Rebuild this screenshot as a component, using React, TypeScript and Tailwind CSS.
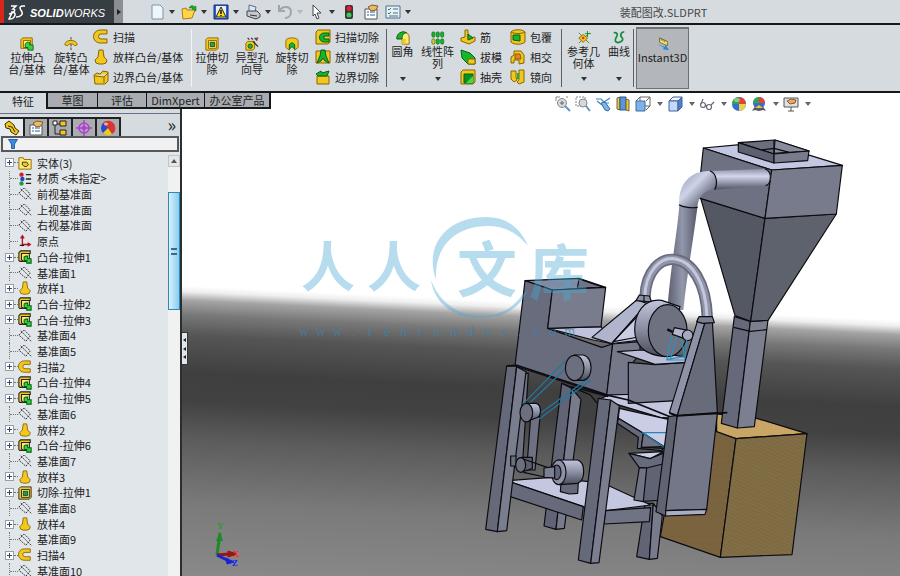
import React from 'react';

const Y = '#f2c81e';
const YL = '#ffe978';
const YD = '#8a6400';
const G = '#17b52a';
const GD = '#07601a';

const glyphs: Record<string, React.ReactNode> = {
  extrude: (
    <g strokeWidth="1">
      <path d="M1 3l2-2h11v10l-2 2H1z" fill={Y} stroke={YD} />
      <path d="M4 4h8v8H4z" fill={YL} stroke={YD} />
      <path d="M6 8l2-2h3v3h4v6H9v-3H6z" fill="#35d33f" stroke={GD} />
    </g>
  ),
  treeboss: (
    <g strokeWidth="1.200">
      <path d="M1 3l2-2h11v3H5v9H2l-1-1z" fill={Y} stroke="#222" />
      <path d="M4 4h9v9H6l-2-2z" fill={YL} stroke="#222" />
      <path d="M7 8l2-1h2v3h4v5h-5v-3H7z" fill="#35d33f" stroke={GD} />
    </g>
  ),
  revolve: (
    <g>
      <path d="M8 0v16" stroke="#333" strokeDasharray="3 1" />
      <path d="M1 9c0-4 4-5 7-5s7 1 7 5l-3 1c-1-2-2-2-4-2s-3 0-4 2z" fill={Y} stroke={YD} />
    </g>
  ),
  sweep: (
    <path d="M14 1H7a6 6 0 0 0 0 13h7v-4H8a2 2 0 0 1 0-5h6z" fill={Y} stroke={YD} />
  ),
  loft: <path d="M6 1h4l1 7 3 3-1 3-3 1H6l-3-1-1-3 3-3z" fill={Y} stroke={YD} />,
  boundary: (
    <path d="M1 6l3-2 3 1 3-3 5 1v9l-3 3H2zM2 7l9 1 4-4M11 8v6" fill={Y} stroke={YD} />
  ),
  cut: (
    <g>
      <path d="M1 3l2-2h12v12l-2 2H1z" fill={Y} stroke={YD} />
      <path d="M4 4h9v9H4z" fill={YL} stroke={YD} />
      <path d="M6 6h5v5H6z" fill="#3f9a32" stroke="#134d12" />
    </g>
  ),
  hole: (
    <g>
      <path d="M1 7l2-2h8v8l-2 2H1z" fill={Y} stroke={YD} />
      <circle cx="6" cy="10.500" r="2.500" fill="#3aa836" stroke={GD} />
      <path d="M3 1l2 2M7 1l2 2M11 1l3 3M9 5l6 6" stroke="#333" strokeWidth="1.500" />
      <path d="M13 1l2 1" stroke="#c22" strokeWidth="2" />
    </g>
  ),
  revcut: (
    <g>
      <path d="M1 4c0-4 14-4 14 0v8l-4 3V9H5v6l-4-3z" fill={Y} stroke={YD} />
      <path d="M5 14V9c1-3 5-3 6 0v5l-3-3z" fill={G} stroke={GD} />
    </g>
  ),
  sweepcut: (
    <g>
      <path d="M1 3l2-2h12v12l-2 2H1z" fill={Y} stroke={YD} />
      <path d="M14 4H9a4 4 0 0 0 0 9h5v-3H9V7h5z" fill={G} stroke={GD} />
    </g>
  ),
  loftcut: (
    <g>
      <path d="M1 2h14v12H1z" fill={Y} stroke={YD} />
      <path d="M6 1h4l1 6 3 7-4-2-2-3-2 3-4 2 3-7z" fill={G} stroke={GD} />
    </g>
  ),
  boundcut: (
    <g>
      <path d="M2 7h12v8H2z" fill={Y} stroke={YD} />
      <path d="M1 5l5-3 1 2 7-2-2 5H3z" fill={G} stroke={GD} />
    </g>
  ),
  fillet: (
    <g>
      <path d="M1 9c0-5 3-8 8-8 4 1 6 3 6 6v8H7V9z" fill={YL} stroke={YD} />
      <path d="M7 9h4v6H7z" fill={Y} />
      <path d="M1 9c0-5 3-8 8-8l3 1c-4 1-5 3-5 7z" fill={G} stroke={GD} />
    </g>
  ),
  pattern: (
    <g stroke={GD} strokeWidth=".7">
      {[1, 6, 11].map((x) => (
        <g key={x}>
          <rect x={x} y="1" width="3.500" height="6" rx="1.500" fill={G} />
          <rect x={x} y="9" width="3.500" height="6" rx="1.500" fill={x === 1 ? Y : G} />
        </g>
      ))}
    </g>
  ),
  rib: (
    <g>
      <path d="M5 1h3v8l7-1v4l-6 3-8-3v-3l4-1z" fill={Y} stroke={YD} />
      <path d="M8 5l5 4-5 2z" fill={G} stroke={GD} />
    </g>
  ),
  draft: (
    <g>
      <path d="M1 1l9 3 5 5v6H8L2 9z" fill={G} stroke={GD} />
      <path d="M8 10h7v5H8z" fill={Y} stroke={YD} />
    </g>
  ),
  shell: (
    <g>
      <path d="M1 3l2-2h12v12l-2 2H1z" fill={Y} stroke={YD} />
      <path d="M4 5h9v9H4z" fill="#0f8f22" stroke={GD} />
      <path d="M6 14l7-7v7z" fill="#39df46" />
    </g>
  ),
  wrap: (
    <g>
      <path d="M1 3c2-3 12-3 14 0v10c-3 3-11 3-14 0z" fill={Y} stroke={YD} />
      <path d="M3 6h7v6l-7-1z" fill={G} stroke={GD} />
      <path d="M1 3c3 2 11 2 14 0" fill="none" stroke={YD} />
    </g>
  ),
  intersect: (
    <g>
      <path d="M4 2h7l3 4v8l-5 1v-4H4v3H1V8l3-2z" fill={Y} stroke={YD} />
      <path d="M5 5h5l1 5H5z" fill="#e8811c" stroke={YD} />
    </g>
  ),
  mirror: (
    <g>
      <path d="M1 2h5v6l1 3-3 2-3-3z" fill={Y} stroke={YD} />
      <path d="M9 1h5v12l-5 2-2-2 2-2z" fill={Y} stroke={YD} />
      <path d="M7 4h2v6H7z" fill={G} />
    </g>
  ),
  refgeo: (
    <g>
      <path d="M2 2l12 12M2 14L14 2" stroke="#2d8c2d" />
      <path d="M2 8l5-4 5 4-5 5z" fill={Y} stroke={YD} />
      <circle cx="7" cy="8" r="1.500" fill="#d33" />
      <path d="M12 0v7M9 3h7" stroke="#128a1c" />
    </g>
  ),
  curves: (
    <path
      d="M2 2c4-1 5 2 3 5s-2 7 3 6 5-4 3-6-1-6 3-6"
      fill="none"
      stroke="#128a3a"
      strokeWidth="2"
    />
  ),
  instant: (
    <g>
      <path d="M4 1l9 4v5L4 6z" fill="#f3e27a" stroke="#75651a" />
      <path d="M6 2v2M8 3v2M10 4v2" stroke="#75651a" />
      <path d="M1 8l8 4-1 2 7 1-4-6-1 2z" fill="#2b86d8" />
    </g>
  ),
  folder: (
    <g>
      <path d="M1 2h5l1 2h8v11H1z" fill={YL} stroke={YD} />
      <path d="M5 7h5l2 3-2 2H7l-2-2z" fill={Y} stroke="#222" />
    </g>
  ),
  material: (
    <g>
      <circle cx="4" cy="3" r="2.500" fill="#d3202b" />
      <circle cx="4" cy="13" r="2.500" fill="#23983a" />
      <circle cx="5" cy="8" r="2.500" fill="#2447c8" />
      <path d="M9 3h6M9 8h6M9 13h6" stroke="#222" strokeWidth="1.500" />
    </g>
  ),
  plane: (
    <g fill="none" stroke="#222" strokeDasharray="2 1">
      <path d="M1 7l6-6 7 7-5 6z" />
      <path d="M3 2l12 12" />
    </g>
  ),
  origin: (
    <g fill="none" stroke="#b3121d" strokeWidth="1.500">
      <path d="M5 14V2M3 5l2-3 2 3M5 12h9M11 10l3 2-3 2" />
      <path d="M2 13h5" stroke="#222" />
    </g>
  ),
  treecut: (
    <g>
      <path d="M1 3l2-2h12v12l-2 2H1z" fill={Y} stroke="#222" />
      <path d="M4 4h9v9H4z" fill={YL} stroke="#222" />
      <path d="M6 6h5v5H6z" fill="#1c9a54" stroke="#134d12" />
    </g>
  ),
  part: (
    <g>
      <path d="M1 4l4-3 5 4 1 3 4 3-3 4-5-3-1-3-4-1z" fill={Y} stroke="#3b2d00" />
      <path d="M4 6l4 1 3 5" fill="none" stroke="#3b2d00" />
    </g>
  ),
  props: (
    <g>
      <path d="M2 5h12v10H2z" fill="#fff" stroke="#555" />
      <path d="M4 8h2M4 11h2M7 8h5M7 11h5" stroke="#2a5ca8" />
      <path d="M5 3l4-2 6 1-2 4-5 1z" fill="#e9b96e" stroke="#8a5a1c" />
    </g>
  ),
  config: (
    <g>
      <path d="M3 1v13h6M3 4h6" fill="none" stroke="#222" />
      <path d="M8 1h6v5H8zM8 10h6v5H8z" fill={Y} stroke="#222" />
      <path d="M1 1h4v4H1z" fill="#fff" stroke="#222" />
    </g>
  ),
  target: (
    <g fill="none" stroke="#b23fd0" strokeWidth="1.500">
      <circle cx="8" cy="8" r="5" />
      <circle cx="8" cy="8" r="1.500" />
      <path d="M8 0v16M0 8h16" />
    </g>
  ),
  ball: (
    <g>
      <circle cx="8" cy="8" r="7" fill="#2748c8" />
      <path d="M8 8L3 3a7 7 0 0 1 11 1z" fill="#e0352b" />
      <path d="M8 8l6-4a7 7 0 0 1-2 10z" fill="#e0352b" />
      <path d="M8 8l4 6a7 7 0 0 1-9-1z" fill={Y} />
      <ellipse cx="6" cy="4" rx="2" ry="1.500" fill="#fff" opacity=".6" />
    </g>
  ),
  appearance: (
    <g>
      <circle cx="8" cy="8" r="7" fill="#3a6ad4" />
      <path d="M8 8V1a7 7 0 0 0-7 7z" fill="#2fa84a" />
      <path d="M8 8V1a7 7 0 0 1 7 7z" fill="#e04434" />
      <path d="M8 8h7a7 7 0 0 1-7 7z" fill="#ead34a" />
      <ellipse cx="6" cy="4" rx="3" ry="2" fill="#fff" opacity=".4" />
    </g>
  ),
  scene: (
    <g>
      <path d="M1 15l4-6h6l4 6-3-1-4 1-4-1z" fill="#555" />
      <circle cx="8" cy="7" r="6" fill="#3a6ad4" />
      <path d="M8 7V1a6 6 0 0 0-6 6z" fill="#2fa84a" />
      <path d="M8 7V1a6 6 0 0 1 6 6z" fill="#e04434" />
      <path d="M4 12l4-3 4 3" fill={Y} />
    </g>
  ),
  funnel: (
    <path d="M2 2h12l-4 6v6H6V8z" fill="#2f8fe8" stroke="#123f8c" />
  ),
  newdoc: <path d="M3 1h8l3 3v11H3z" fill="#eef6fb" stroke="#7b94a5" />,
  open: (
    <g>
      <path d="M1 5l4-1 1 2h8l-3 8-9 1z" fill="#ffd54a" stroke="#b57b10" />
      <path d="M8 4c2-3 4-3 5-1l2-1v5l-4-2 1-1z" fill={G} stroke={GD} strokeWidth=".5" />
    </g>
  ),
  save: (
    <g>
      <path d="M1 1h14v14H1z" fill="#2d62c9" stroke="#102f73" />
      <path d="M3 2h10v12H3z" fill="#e9eefb" />
      <path d="M8 3l5 10H3z" fill="#ffdd19" stroke="#222" />
      <path d="M8 6v4M8 11v1" stroke="#111" strokeWidth="1.500" />
    </g>
  ),
  print: (
    <g>
      <path d="M4 1l7 2-1 5H4z" fill="#d5e7fa" stroke="#668" />
      <path d="M2 7h10l3 3v3l-4 2-9-3z" fill="#c3c7cf" stroke="#444" />
      <path d="M5 11l7 1" stroke="#333" />
    </g>
  ),
  undo: (
    <path
      d="M2 1v6h6M2 7c4-6 12-5 12 1 0 4-3 6-6 6"
      fill="none"
      stroke="#a0a5aa"
      strokeWidth="2"
    />
  ),
  cursor: <path d="M4 1l8 8H8l2 5-2 1-2-5-2 2z" fill="#fff" stroke="#444" />,
  traffic: (
    <g>
      <rect x="4" y="1" width="8" height="14" rx="2" fill="#3c3535" />
      <circle cx="8" cy="4.500" r="2.500" fill="#e3202a" />
      <circle cx="8" cy="11" r="2.500" fill="#2cd24c" />
    </g>
  ),
  list: (
    <g>
      <path d="M1 2h14v12H1z" fill="#e6f1f5" stroke="#4c6d8c" />
      <path d="M3 5l1 1 2-2M3 9l1 1 2-2" fill="none" stroke="#1b8b3a" />
      <path d="M8 5h5M8 9h5M4 12h9" stroke="#4c6d8c" />
    </g>
  ),
  zoomfit: (
    <g>
      <path d="M1 5V1h4M11 1h2" fill="none" stroke="#888" />
      <circle cx="7" cy="7" r="4.500" fill="#d5d9dd" stroke="#888" />
      <path d="M5 7h4M7 5v4" stroke="#666" />
      <path d="M10 10l5 5" stroke="#5a97cc" strokeWidth="2" />
    </g>
  ),
  zoomarea: (
    <g>
      <path d="M1 1h9v9H1z" fill="none" stroke="#888" strokeDasharray="2 1" />
      <circle cx="8" cy="7" r="4" fill="#d5d9dd" stroke="#888" />
      <path d="M11 10l4 5" stroke="#5a97cc" strokeWidth="2" />
    </g>
  ),
  prev: (
    <g>
      <path d="M1 3h5l4 4M2 5l5 4M15 2l-6 4M10 7h4" fill="none" stroke="#3d85c0" strokeWidth="1.200" />
      <path d="M6 7l4-1 5 7-2 2-3-1z" fill="#7fb4e0" stroke="#2d6fa8" />
    </g>
  ),
  section: (
    <g>
      <path d="M2 2l3-1v13l-3-1z" fill={Y} stroke="#665" />
      <path d="M5 1h6v13H5z" fill="#5c95da" stroke="#2c5796" />
      <path d="M11 3l3 1v11l-3-1z" fill={Y} stroke="#665" />
    </g>
  ),
  orient: (
    <g>
      <path d="M5 1h10v9H5zM1 5l4-4M11 5l4-4M11 14l4-4" fill="#fff" stroke="#666" />
      <path d="M1 5h9v10H1z" fill="#7fb2e6" stroke="#3a6ca5" />
    </g>
  ),
  cube: (
    <g stroke="#42639b">
      <path d="M2 5l4-4h9l-4 4z" fill="#eef4ff" />
      <path d="M2 5h9v10H2z" fill="#c4d8f7" />
      <path d="M11 5l4-4v10l-4 4z" fill="#4b7fd0" />
    </g>
  ),
  glasses: (
    <g fill="none" stroke="#667" strokeWidth="1.200">
      <circle cx="4" cy="9" r="2.500" />
      <circle cx="10" cy="11" r="2.500" />
      <path d="M2 8l2-5M12 9l3-3M6 9l2 1" />
    </g>
  ),
  monitor: (
    <g>
      <path d="M1 2h14v9H1zM5 15h6M8 11v4" fill="#dde2e6" stroke="#555" />
      <path d="M4 5l4-2 5 1-1 3-5 1z" fill="#e9a96e" stroke="#8a5a1c" />
    </g>
  ),
};

function Icon({ name, className = 'size-4' }: { name: string; className?: string }) {
  return (
    <svg viewBox="0 0 16 16" fill="none" className={`shrink-0 ${className}`} aria-hidden="true">
      {glyphs[name]}
    </svg>
  );
}

function Caret({ className = 'text-[#333]' }: { className?: string }) {
  return (
    <svg viewBox="0 0 6 4" className={`h-1 w-1.5 shrink-0 ${className}`} aria-hidden="true">
      <path d="M0 0h6L3 4z" fill="currentColor" />
    </svg>
  );
}

function BigTool({ icon, label, width, drop = false }: { icon: string; label: string; width: string; drop?: boolean }) {
  return (
    <button type="button" className={`flex flex-col items-center leading-[12px] ${width} ${drop ? 'pb-2.5 pt-1.5' : 'pt-3'}`}>
      <Icon name={icon} className="size-[14px]" />
      <span className="whitespace-pre-line">{label}</span>
      {drop && <Caret className="mt-auto text-[#333]" />}
    </button>
  );
}

function ToolStack({ items, width }: { items: [string, string][]; width: string }) {
  return (
    <div className={`flex flex-col pt-0.5 ${width}`}>
      {items.map(([icon, label]) => (
        <button key={label} type="button" className="flex h-5 items-center gap-1 whitespace-nowrap">
          <Icon name={icon} />
          {label}
        </button>
      ))}
    </div>
  );
}

const Sep = ({ className = 'bg-[#5b5f63]' }: { className?: string }) => (
  <div className={`my-1 w-px ${className}`} />
);

const quick: [string, string, boolean][] = [
  ['newdoc', '新建', true],
  ['open', '打开', true],
  ['save', '保存', true],
  ['print', '打印', true],
  ['undo', '撤销', true],
  ['cursor', '选择', true],
  ['traffic', '重建', false],
  ['props', '属性', false],
  ['list', '选项', true],
];

const headsUp: [string, string, boolean][] = [
  ['zoomfit', '整屏显示', false],
  ['zoomarea', '局部放大', false],
  ['prev', '上一视图', false],
  ['section', '剖面视图', false],
  ['orient', '视图定向', true],
  ['cube', '显示样式', true],
  ['glasses', '隐藏项目', true],
  ['appearance', '编辑外观', false],
  ['scene', '应用布景', true],
  ['monitor', '视图设定', true],
];

const tree: [string, string, boolean][] = [
  ['folder', '实体(3)', true],
  ['material', '材质 <未指定>', false],
  ['plane', '前视基准面', false],
  ['plane', '上视基准面', false],
  ['plane', '右视基准面', false],
  ['origin', '原点', false],
  ['treeboss', '凸台-拉伸1', true],
  ['plane', '基准面1', false],
  ['loft', '放样1', true],
  ['treeboss', '凸台-拉伸2', true],
  ['treeboss', '凸台-拉伸3', true],
  ['plane', '基准面4', false],
  ['plane', '基准面5', false],
  ['sweep', '扫描2', true],
  ['treeboss', '凸台-拉伸4', true],
  ['treeboss', '凸台-拉伸5', true],
  ['plane', '基准面6', false],
  ['loft', '放样2', true],
  ['treeboss', '凸台-拉伸6', true],
  ['plane', '基准面7', false],
  ['loft', '放样3', true],
  ['treecut', '切除-拉伸1', true],
  ['plane', '基准面8', false],
  ['loft', '放样4', true],
  ['plane', '基准面9', false],
  ['sweep', '扫描4', true],
  ['plane', '基准面10', false],
];

const P = ({ p, f }: { p: string; f: string }) => <polygon points={p} fill={f} />;

function Machine() {
  return (
    <svg
      viewBox="182 93 718 483"
      preserveAspectRatio="xMidYMid slice"
      className="absolute inset-0 size-full"
      role="img"
      aria-label="装配图改"
    >
      <defs>
        <linearGradient id="floor" gradientUnits="userSpaceOnUse" x1="500" y1="301" x2="486" y2="590">
          <stop offset="0" stopColor="#fff" />
          <stop offset=".02" stopColor="#eee" />
          <stop offset=".05" stopColor="#a4a4a4" />
          <stop offset=".1" stopColor="#787878" />
          <stop offset=".17" stopColor="#555" />
          <stop offset=".3" stopColor="#3f3f3f" />
          <stop offset=".4" stopColor="#424242" />
          <stop offset=".53" stopColor="#5c5c5c" />
          <stop offset=".75" stopColor="#7a7a7a" />
          <stop offset="1" stopColor="#898989" />
        </linearGradient>
        <linearGradient id="tubeH" x1="0" y1="0" x2="0" y2="1">
          <stop offset="0" stopColor="#8f93a8" />
          <stop offset=".35" stopColor="#d3d7ec" />
          <stop offset="1" stopColor="#4e5262" />
        </linearGradient>
        <linearGradient id="tubeV" x1="0" y1="0" x2="1" y2="0">
          <stop offset="0" stopColor="#5a5e6f" />
          <stop offset=".5" stopColor="#9397ab" />
          <stop offset="1" stopColor="#565a6a" />
        </linearGradient>
        <linearGradient id="elbow" x1="0" y1="0" x2="1" y2="1">
          <stop offset="0" stopColor="#8f93a8" />
          <stop offset=".4" stopColor="#cfd3ea" />
          <stop offset=".8" stopColor="#565a6a" />
        </linearGradient>
        <linearGradient id="rim" x1="0" y1="0" x2="0" y2="1">
          <stop offset="0" stopColor="#c2c6dc" />
          <stop offset=".5" stopColor="#8a8ea2" />
          <stop offset="1" stopColor="#474b59" />
        </linearGradient>
        <pattern id="grain" width="7" height="5" patternUnits="userSpaceOnUse" patternTransform="rotate(25)">
          <rect width="7" height="5" fill="#75633f" />
          <path d="M0 1h4M3 4h4" stroke="#96804f" strokeWidth="1.500" />
        </pattern>
        <pattern id="grainTop" width="7" height="5" patternUnits="userSpaceOnUse">
          <rect width="7" height="5" fill="#d0ac6c" />
          <path d="M0 1h4M3 4h4" stroke="#b08b4e" strokeWidth="1" />
        </pattern>
        <pattern id="grainSide" width="6" height="20" patternUnits="userSpaceOnUse">
          <rect width="6" height="20" fill="#7d6641" />
          <path d="M2 0v12M5 8v12" stroke="#6a5534" strokeWidth="1" />
        </pattern>
      </defs>
      <rect x="-400" y="-200" width="1900" height="1200" fill="url(#floor)" />

      <g transform="translate(480 240) scale(.33333)" stroke="#0b0b10" strokeWidth="3.500" strokeLinejoin="round">
        <P p="710,522 830,535 981,581 768,596 710,580" f="url(#grainTop)" />
        <P p="768,596 721,952 541,890 600,560 710,575" f="url(#grainSide)" />
        <P p="768,596 981,581 936,944 721,952" f="url(#grain)" />
        <P p="763,230 811,244 772,564 724,550" f="#656979" />
        <P p="811,244 864,240 823,560 772,564" f="#7b7f90" />
        <path d="M761 262l50 12 50-5" fill="none" />
      </g>

      <g transform="translate(630 130) scale(.33333)" stroke="#0b0b10" strokeWidth="3.500" strokeLinejoin="round">
        <P p="212,205 405,265 362,574 315,557" f="#545863" />
        <P p="405,265 619,252 414,571 362,574" f="#5e626d" />
        <P p="220,54 330,44 540,76 637,106 425,120" f="#c3c7e1" />
        <P p="220,54 425,120 405,265 204,203" f="#6d7181" />
        <P p="425,120 637,106 619,252 405,265" f="#777b8c" />
        <P p="325,38 435,30 537,63 432,72" f="#6a6e7d" />
        <P p="435,30 537,63 432,70" f="#888c9d" />
        <P p="325,38 432,72 432,99 325,66" f="#5c606f" />
        <P p="432,72 537,63 533,92 432,99" f="#777b8b" />
        <path d="M395 60l37-5 46 12M432 30v40" fill="none" />
        <path d="M148 225C142 310 120 420 112 540h48C170 440 190 330 202 233z" fill="url(#tubeV)" stroke="none" />
        <path d="M240 123L405 117C428 122 426 164 408 167L252 179z" fill="url(#tubeH)" stroke="none" />
        <path d="M242 123C180 120 142 165 148 228L202 234C204 200 220 182 255 178C262 160 258 130 242 123z" fill="url(#elbow)" stroke="none" />
        <path d="M240 123c20 5 24 40 14 56M147 224c12 8 38 11 56 8M405 117c22 6 20 46 2 50" fill="none" />
      </g>

      <g transform="translate(480 240) scale(.33333)" stroke="#0b0b10" strokeWidth="3.500" strokeLinejoin="round">
        <g fill="none" strokeLinecap="butt">
          <path d="M495 172C500 12 675 10 682 234" stroke="#666a7c" strokeWidth="34" />
          <path d="M495 172C500 12 675 10 682 234" stroke="#9094a8" strokeWidth="24" />
          <path d="M494 172C500 9 675 7 681 234" stroke="#c4c8dd" strokeWidth="9" />
        </g>

        <P p="245,430 275,445 228,868 192,858" f="#606474" />
        <P p="275,445 303,478 253,865 228,868" f="#777b8b" />
        <P p="112,400 145,400 127,680 100,680" f="#6d7181" />
        <P p="152,530 180,530 165,690 140,690" f="#6d7181" />
        <P p="495,790 520,790 508,958 470,950" f="#606474" />
        <P p="520,790 547,828 532,955 508,958" f="#777b8b" />
        <P p="500,650 560,650 550,780 480,785" f="#5f6373" />

        <P p="80,722 215,712 370,730 512,795 378,812 310,800" f="#c3c7e0" />
        <P p="80,722 310,800 305,840 75,765" f="#666a7a" />
        <P p="376,812 512,803 508,845 372,852" f="#6f7383" />

        <P p="80,378 110,378 52,875 17,868" f="#656979" />
        <P p="110,380 138,395 80,872 52,875" f="#797d8e" />

        <P p="385,465 443,460 480,485 590,480 580,535 540,532 360,478" f="#c3c7e0" />
        <P p="418,505 565,538 560,625 490,580 415,535" f="#c9cde6" />
        <P p="415,535 490,580 484,622 550,625 545,632 472,625 475,592 412,550" f="#666a7a" />
        <P p="490,580 550,620 484,622" f="#6f7383" />
        <path d="M487 578h75M490 580l60 40" stroke="#2a86b4" fill="none" />
        <P p="447,640 550,635 510,656" f="#c9cde6" />
        <P p="447,640 510,656 550,640 548,672 500,684 478,683" f="#666a7a" />
        <P p="478,683 500,684 490,785 462,780" f="#6f7383" />

        <P p="135,122 297,115 377,142 217,150" f="#8589a0" />
        <P p="297,117 371,142 292,145" f="#707484" />
        <P p="203,265 363,260 400,312 340,300" f="#bfc3dd" />
        <P p="135,122 217,150 203,265 365,322 398,312 380,467 105,378" f="#686c7c" />
        <P p="217,150 377,142 363,260 203,265" f="#787c8c" />
        <P p="398,312 480,305 480,345 460,365 445,463 380,465" f="#747888" />
        <P p="470,180 502,190 395,311 336,292" f="#b0b4cc" />
        <P p="502,190 530,190 480,300 395,311" f="#c9cde3" />
        <path d="M490 210L400 305l75-14" fill="none" />
        <P p="478,165 508,168 515,186 468,182" f="#8b8fa2" />
        <path d="M492 168v20" fill="none" />

        <P p="445,367 525,374 618,367 590,482 445,490" f="#737787" />
        <P p="412,335 485,330 625,352 618,367 525,373" f="#b9bdd6" />
        <path d="M80 378l30-2 275 90 60 14 125 50" fill="none" strokeWidth="5" />
        <path d="M245 430l85 34 30 35M275 440l110 30" fill="none" />

        <path d="M545 181C490 175 465 220 464 268C464 315 490 345 555 350L600 200z" fill="url(#rim)" />
        <ellipse cx="563" cy="272" rx="58" ry="78" fill="#6d7180" />
        <path d="M583 263l40 8v28l-46-16z" fill="#b3b7cc" />
        <circle cx="623" cy="286" r="16" fill="#a5a9be" />
        <path d="M562 268l16 8" strokeWidth="7" />
        <g stroke="#2a93c4" fill="none">
          <path d="M575 285l-15 75h55l5-60M590 290l-20 70M605 300l10 60M562 358l50-8" />
        </g>

        <P p="565,530 592,526 557,828 528,815" f="#5f6372" />
        <P p="592,526 712,520 680,808 557,812" f="#737787" />
        <P p="557,812 680,808 675,823 557,828" f="#a9adc4" />
        <P p="655,235 675,248 592,526 568,518" f="#8e92a6" />
        <P p="675,248 697,240 712,518 592,526" f="#686c7a" />
        <P p="657,230 697,230 703,248 668,250 650,245" f="#7b7f90" />
        <path d="M568 520l24 8 150-10" fill="none" strokeWidth="5" />

        <P p="355,475 392,480 332,970 295,960" f="#656979" />
        <P p="392,480 418,497 357,968 332,970" f="#7a7e8f" />

        <g stroke="#23789e" fill="none">
          <path d="M258 360L133 488M268 375L143 495M322 418L160 535M332 420L178 537" />
        </g>
        <path d="M283 345h26c32 5 32 70 2 76h-26z" fill="url(#rim)" />
        <ellipse cx="284" cy="384" rx="28" ry="38" fill="#6b6f7e" />
        <path d="M138 490h30c18 5 18 40 0 44l-28 10z" fill="url(#rim)" />
        <ellipse cx="139" cy="518" rx="19" ry="28" fill="#6b6f7e" />

        <rect x="92" y="648" width="16" height="30" fill="#6b6f7e" />
        <path d="M125 652h32v34l-32 10z" fill="#5b5f6e" />
        <ellipse cx="122" cy="675" rx="15" ry="22" fill="#6b6f7e" />
        <path d="M130 657l80 28M130 697l65 14" fill="none" />
        <P p="243,730 295,725 293,760 268,762 241,755" f="#656979" />
        <path d="M235 660h58c24 8 24 60 0 70l-55 4z" fill="url(#rim)" />
        <ellipse cx="236" cy="697" rx="22" ry="37" fill="#8d91a5" />
        <ellipse cx="230" cy="697" rx="13" ry="22" fill="#62667a" />
        <path d="M192 684l32-4v34l-32-2z" fill="#7b7f92" />
      </g>

      <g fill="none" strokeWidth="1">
        <path d="M217 555l3-22" stroke="#1c8a24" strokeWidth="3" />
        <path d="M216 541l4-9 3 9z" fill="#1c8a24" />
        <path d="M217 555l12-1" stroke="#9c1418" strokeWidth="3" />
        <path d="M228 551l9 3-9 3z" fill="#9c1418" stroke="#9c1418" />
        <path d="M217 555l10 5" stroke="#1824d0" strokeWidth="3" />
        <path d="M226 558l8 4-7 2z" fill="#1824d0" stroke="#1824d0" />
      </g>
      <g fontFamily="Liberation Serif, serif" fontSize="9" fontWeight="700">
        <text x="217" y="529" fill="#1fa02a">Y</text>
        <text x="233" y="557" fill="#ff2a2a">X</text>
        <text x="232" y="566" fill="#1824ff">Z</text>
      </g>

      <g fill="#4aaad6" opacity=".4">
        <path d="M436 280C424 246 446 217 486 217C506 217 520 227 528 246C516 232 504 226 488 226C456 226 434 246 436 280z" />
        <path d="M431 280C440 304 460 316 482 316C502 315 514 307 522 295L528 290C520 308 504 318 480 318C452 318 434 302 431 280z" />
        <g fontFamily="Noto Sans CJK SC, sans-serif" fontWeight="700">
          <text x="301" y="287" fontSize="54">人</text>
          <text x="367" y="287" fontSize="54">人</text>
          <text x="457" y="292" fontSize="60">文</text>
          <text x="529" y="295" fontSize="60">库</text>
        </g>
      </g>
      <g fill="#3a86ac" opacity=".7" fontFamily="Liberation Serif, serif" fontSize="14" textAnchor="middle">
        {'www.renrendoc.com'.split('').map((c, i) => (
          <text key={i} x={304 + i * 16.6} y="336">{c}</text>
        ))}
      </g>
    </svg>
  );
}

export default function App() {
  return (
    <div className="flex h-screen flex-col overflow-hidden bg-[#d6dbe0] font-['Noto_Sans_CJK_SC',sans-serif] text-[11px] text-[#222]">
      <header className="flex h-[25px] shrink-0 items-stretch border-b-2 border-[#15181a]">
        <div className="flex w-[114px] items-center border-l-4 border-[#d8261c] bg-[#363d43] pl-1 text-white">
          <svg viewBox="0 0 18 18" className="size-[18px]" fill="none" stroke="#fff" strokeWidth="1.500" aria-hidden="true">
            <path d="M3 3h5l-3 3c3 0 2 4-4 5M3 9c7-1 4 8-2 7l3-6M17 3h-3c-4 1-1 4 0 6s-1 5-6 5" />
          </svg>
          <span className="pl-1 pt-1 font-['Liberation_Sans',sans-serif] text-[11px] italic leading-none">
            <b>SOLID</b>WORKS
          </span>
        </div>
        <button type="button" aria-label="菜单" className="flex w-[9px] items-center justify-center bg-[#8b8e92]">
          <svg viewBox="0 0 4 6" className="h-1.5 w-1" aria-hidden="true"><path d="M0 0l4 3-4 3z" fill="#222" /></svg>
        </button>
        <nav className="flex items-center gap-1.5 pl-[26px]">
          {quick.map(([icon, label, drop]) => (
            <button key={icon} type="button" aria-label={label} className="flex items-center gap-1">
              <Icon name={icon} />
              {drop && <Caret className={icon === 'undo' ? 'text-[#b4b8bc]' : 'text-[#333]'} />}
            </button>
          ))}
        </nav>
        <h1 className="flex flex-1 items-center justify-center pl-4 pt-0.5 text-[#444]">装配图改.SLDPRT</h1>
      </header>

      <div className="flex h-[68px] shrink-0 border-b-2 border-[#15181a] pl-[5px]">
        <BigTool icon="extrude" label={'拉伸凸\n台/基体'} width="w-11" />
        <BigTool icon="revolve" label={'旋转凸\n台/基体'} width="w-11" />
        <ToolStack width="w-[98px]" items={[['sweep', '扫描'], ['loft', '放样凸台/基体'], ['boundary', '边界凸台/基体']]} />
        <Sep className="bg-[#f2f4f6]" />
        <BigTool icon="cut" label={'拉伸切\n除'} width="w-10" />
        <BigTool icon="hole" label={'异型孔\n向导'} width="w-10" />
        <BigTool icon="revcut" label={'旋转切\n除'} width="w-10" />
        <ToolStack width="w-[74px] pl-[3px]" items={[['sweepcut', '扫描切除'], ['loftcut', '放样切割'], ['boundcut', '边界切除']]} />
        <Sep />
        <BigTool icon="fillet" label="圆角" width="w-[31px]" drop />
        <BigTool icon="pattern" label={'线性阵\n列'} width="w-[39px]" drop />
        <ToolStack width="w-[53px] pl-[3px]" items={[['rib', '筋'], ['draft', '拔模'], ['shell', '抽壳']]} />
        <ToolStack width="w-[51px]" items={[['wrap', '包覆'], ['intersect', '相交'], ['mirror', '镜向']]} />
        <Sep />
        <BigTool icon="refgeo" label={'参考几\n何体'} width="w-[43px]" drop />
        <BigTool icon="curves" label="曲线" width="w-[28px]" drop />
        <Sep />
        <button type="button" className="my-0.5 ml-0.5 flex w-[53px] flex-col items-center border border-t-2 border-[#6d7175] bg-[#b3b7bb] pt-2 leading-[12px]">
          <Icon name="instant" className="size-[14px]" />
          Instant3D
        </button>
      </div>

      <div className="grid min-h-0 flex-1 grid-cols-[182px_1fr] grid-rows-[16px_1fr]">
        <div role="tablist" className="z-10 col-span-2 col-start-1 row-start-1 flex w-[271px] border-[#15181a] text-center leading-[14px]">
          <button type="button" role="tab" aria-selected="true" className="w-[48px] border-r-2 border-[#15181a] bg-[#d6dbe0]">特征</button>
          <button type="button" role="tab" className="w-[50px] border-b-2 border-r border-[#15181a] bg-[#a9adb1]">草图</button>
          <button type="button" role="tab" className="w-[49px] border-b-2 border-r border-[#15181a] bg-[#a9adb1]">评估</button>
          <button type="button" role="tab" className="w-[58px] border-b-2 border-r border-[#15181a] bg-[#a9adb1]">DimXpert</button>
          <button type="button" role="tab" className="w-[66px] border-b-2 border-r-2 border-[#15181a] bg-[#a9adb1]">办公室产品</button>
        </div>

        <aside className="col-start-1 row-start-2 flex min-h-0 flex-col overflow-hidden border-r-2 border-[#2b2e30] bg-[#e1e6eb]">
          <div className="h-[5px] shrink-0 border-b border-[#6a6e86] bg-[#d6dbe0]" />
          <div className="flex h-[22px] shrink-0 items-end bg-[#d6dbe0] pr-1">
            {['part', 'props', 'config', 'target', 'ball'].map((n, i) => (
              <button
                key={n}
                type="button"
                aria-label={`面板 ${i + 1}`}
                className={`flex h-[19px] items-center justify-center border-r-2 border-t-2 border-[#222] ${i === 0 ? 'w-[25px] bg-[#e8ecf0]' : 'w-6 bg-[#a9adb1]'}`}
              >
                <Icon name={n} />
              </button>
            ))}
            <button type="button" className="ml-auto text-[18px] leading-[24px]">»</button>
          </div>
          <label className="mx-px flex h-4 shrink-0 items-center border-2 border-[#55595d] bg-[#f1f1f1] pl-1">
            <Icon name="funnel" className="size-3" />
            <input type="text" aria-label="过滤" className="w-full min-w-0 bg-transparent outline-none" />
          </label>
          <div className="flex min-h-0 flex-1 pt-[3px]">
            <div className="min-w-0 flex-1 overflow-hidden">
              <ul className="grid h-[424px] grid-rows-[repeat(27,minmax(0,1fr))] pl-[5px]">
                {tree.map(([icon, label, open], i) => (
                  <li key={i} className="flex min-h-0 items-center whitespace-nowrap">
                    <div className="flex h-full w-[13px] items-center border-[#8a8e92]">
                      {open ? (
                        <button type="button" aria-label="展开" className="flex size-[9px] items-center justify-center border border-[#9a9ea2] bg-white">
                          <svg viewBox="0 0 5 5" className="size-[5px]" aria-hidden="true"><path d="M0 2.500h5M2.500 0v5" stroke="#334a7a" /></svg>
                        </button>
                      ) : (
                        <span className="ml-1 h-full border-l border-dotted border-[#777]" />
                      )}
                      <span className="h-px flex-1 border-t border-dotted border-[#777]" />
                    </div>
                    <Icon name={icon} className="size-[14px]" />
                    <span className="pl-[5px]">{label}</span>
                  </li>
                ))}
              </ul>
            </div>
            <div className="flex w-3 shrink-0 flex-col bg-[#f0f1f1]">
              <button type="button" aria-label="向上" className="flex h-3 items-center justify-center border border-[#c2c4c6] bg-[#e4e6e8]">
                <svg viewBox="0 0 6 4" className="h-1 w-1.5" aria-hidden="true"><path d="M0 4h6L3 0z" fill="#555" /></svg>
              </button>
              <div className="mt-[25px] flex h-[118px] items-center justify-center border border-[#3487b4] bg-gradient-to-r from-[#d8f1fc] to-[#86cdf0]">
                <span className="h-[7px] w-[6px] border-y-2 border-[#3b6a86]" />
              </div>
            </div>
          </div>
        </aside>

        <main className="relative col-start-2 row-span-2 row-start-1 min-h-0 overflow-hidden bg-white">
          <Machine />
          <nav className="relative ml-auto flex w-[345px] items-center gap-1 pt-[3px]">
            {headsUp.map(([icon, label, drop]) => (
              <button key={icon} type="button" aria-label={label} className={`flex items-center ${drop ? 'gap-1.5' : ''}`}>
                <Icon name={icon} />
                {drop && <Caret className="text-[#666]" />}
              </button>
            ))}
          </nav>
          <button type="button" aria-label="折叠面板" className="absolute left-0 top-[239px] flex h-[33px] w-[6px] flex-col items-center justify-evenly border border-l-0 border-[#333] bg-[#e1e6eb]">
            {[0, 1, 2].map((i) => (
              <svg key={i} viewBox="0 0 3 4" className="h-1 w-[3px]" aria-hidden="true"><path d="M3 0v4L0 2z" fill="#222" /></svg>
            ))}
          </button>
        </main>
      </div>
    </div>
  );
}
